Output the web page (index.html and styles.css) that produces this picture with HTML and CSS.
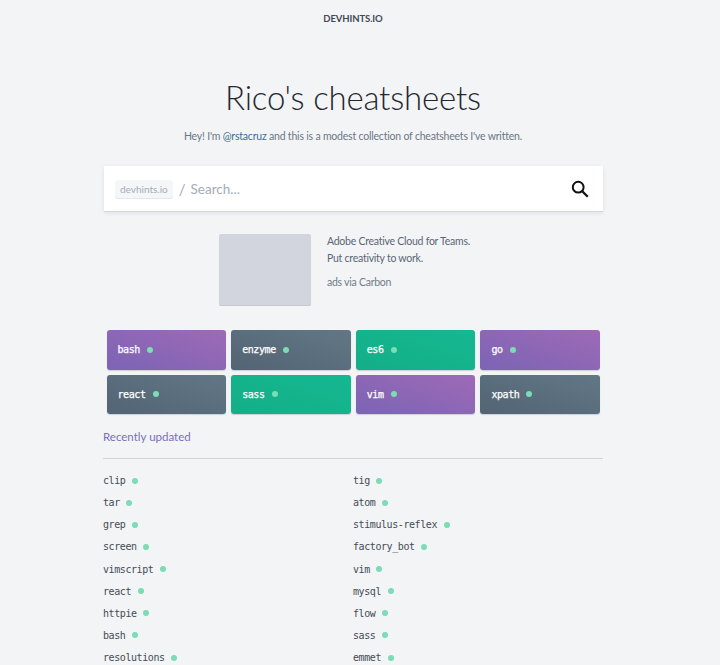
FILE: index.html
```html
<!DOCTYPE html>
<html lang="en">
<head>
<meta charset="utf-8">
<title>Devhints</title>
<link rel="stylesheet" href="styles.css">
</head>
<body>
<header class="top"><a class="brand" href="#">DEVHINTS.IO</a></header>
<main class="page">
  <section class="hero">
    <h1 class="title">Rico's cheatsheets</h1>
    <p class="intro">Hey! I'm <a class="link" href="#">@rstacruz</a> and this is a modest collection of cheatsheets I've written.</p>
  </section>
  <div class="search">
    <span class="chip">devhints.io</span>
    <span class="slash">/</span>
    <span class="placeholder">Search...</span>
    <svg class="search-icon" viewBox="0 0 20 20" width="18" height="18" aria-hidden="true"><circle cx="8" cy="8" r="6" fill="none" stroke="#111" stroke-width="2.2"/><path d="M12.5 12.5 L18.6 18.6" stroke="#111" stroke-width="2.6" fill="none"/></svg>
  </div>
  <div class="ad">
    <div class="ad-img"></div>
    <div class="ad-text">
      <p class="ad-line">Adobe Creative Cloud for Teams.</p>
      <p class="ad-line">Put creativity to work.</p>
      <p class="ad-via">ads via Carbon</p>
    </div>
  </div>
  <div class="tiles">
    <a class="tile purple"><span>bash</span><i class="dot"></i></a>
    <a class="tile slate"><span>enzyme</span><i class="dot"></i></a>
    <a class="tile green"><span>es6</span><i class="dot"></i></a>
    <a class="tile purple"><span>go</span><i class="dot"></i></a>
    <a class="tile slate"><span>react</span><i class="dot"></i></a>
    <a class="tile green"><span>sass</span><i class="dot"></i></a>
    <a class="tile purple"><span>vim</span><i class="dot"></i></a>
    <a class="tile slate"><span>xpath</span><i class="dot"></i></a>
  </div>
  <h2 class="section">Recently updated</h2>
  <div class="list">
    <a class="item"><span>clip</span><i class="dot"></i></a>
    <a class="item"><span>tig</span><i class="dot"></i></a>
    <a class="item"><span>tar</span><i class="dot"></i></a>
    <a class="item"><span>atom</span><i class="dot"></i></a>
    <a class="item"><span>grep</span><i class="dot"></i></a>
    <a class="item"><span>stimulus-reflex</span><i class="dot"></i></a>
    <a class="item"><span>screen</span><i class="dot"></i></a>
    <a class="item"><span>factory_bot</span><i class="dot"></i></a>
    <a class="item"><span>vimscript</span><i class="dot"></i></a>
    <a class="item"><span>vim</span><i class="dot"></i></a>
    <a class="item"><span>react</span><i class="dot"></i></a>
    <a class="item"><span>mysql</span><i class="dot"></i></a>
    <a class="item"><span>httpie</span><i class="dot"></i></a>
    <a class="item"><span>flow</span><i class="dot"></i></a>
    <a class="item"><span>bash</span><i class="dot"></i></a>
    <a class="item"><span>sass</span><i class="dot"></i></a>
    <a class="item"><span>resolutions</span><i class="dot"></i></a>
    <a class="item"><span>emmet</span><i class="dot"></i></a>
  </div>
</main>
</body>
</html>
```

FILE: styles.css
```css
html, body { margin: 0; padding: 0; height: 665px; overflow: hidden; }
body { width: 706px; background: #f3f4f6; font-family: Lato, "Open Sans", sans-serif; color: #4f5d6c; }
a { text-decoration: none; }
.top { display: flex; justify-content: center; padding-top: 11px; height: 37px; }
.brand { font-size: 9.5px; line-height: 16px; font-weight: 700; letter-spacing: -0.1px; color: #3f4a56; }
.page { width: 500px; margin: 0 auto; }
.hero { text-align: center; padding-top: 25px; }
.title { margin: 0; font-size: 33px; line-height: 48px; font-weight: 300; letter-spacing: -0.2px; color: #24282e; }
.intro { margin: 7px 0 0; font-size: 10.5px; line-height: 16px; letter-spacing: -0.2px; color: #6b7785; }
.link { color: #3b6c9a; }
.search { display: flex; align-items: center; height: 45px; margin: 22px 0 0 1px; background: #fff; box-shadow: 0 1px 0 #d3d7de, 0 2px 4px rgba(100,110,130,.15); padding: 0 14px 0 11px; }
.chip { font-size: 10px; line-height: 18px; color: #a5acb7; background: #f5f6f9; border-radius: 3px; padding: 0 5px; box-shadow: 0 1px 0 #e3e6eb; }
.slash { margin-left: 6px; font-size: 15px; color: #a5acb7; }
.placeholder { margin-left: 5px; font-size: 13.5px; color: #a5acb7; }
.search-icon { margin-left: auto; }
.ad { display: flex; gap: 16px; margin: 23px 0 0 116px; height: 71px; }
.ad-img { width: 92px; height: 71px; background: #d2d5dd; border-radius: 2px; box-shadow: 0 1px 0 #c4c8d1; }
.ad-text { margin-top: -1px; font-size: 10.5px; letter-spacing: -0.25px; color: #5a6674; }
.ad-line { margin: 0; line-height: 16.5px; }
.ad-via { margin: 8px 0 0; line-height: 16px; color: #707b88; }
.tiles { display: grid; grid-template-columns: repeat(4, 1fr); gap: 5px; margin: 25px 3px 0 3.5px; }
.tile { display: flex; align-items: center; height: 39.5px; padding-left: 11px; border-radius: 3px; box-shadow: 0 1px 1px rgba(90,100,130,.25); font: 10px "DejaVu Sans Mono", monospace; letter-spacing: -0.42px; -webkit-text-stroke: 0.25px #fff; color: #fff; }
.tile .dot { margin-left: 7px; }
.purple { background: linear-gradient(to top right, #7b64b5, #9e6ab6); }
.slate { background: linear-gradient(to top right, #536474, #627785); }
.green { background: linear-gradient(to top right, #14ae87, #15b891); }
.dot { display: block; width: 6px; height: 6px; border-radius: 50%; background: #7bdcb5; margin-left: 6.5px; }
.section { margin: 15px 0 0; font-size: 11.5px; line-height: 16px; font-weight: 400; color: #7b6cc2; padding-bottom: 13px; border-bottom: 1px solid #cfd3da; }
.list { display: grid; grid-template-columns: 250px 250px; grid-auto-rows: 22.15px; margin-top: 10.45px; }
.item { display: flex; align-items: center; font: 10px "DejaVu Sans Mono", monospace; letter-spacing: -0.42px; color: #444c55; }
```
